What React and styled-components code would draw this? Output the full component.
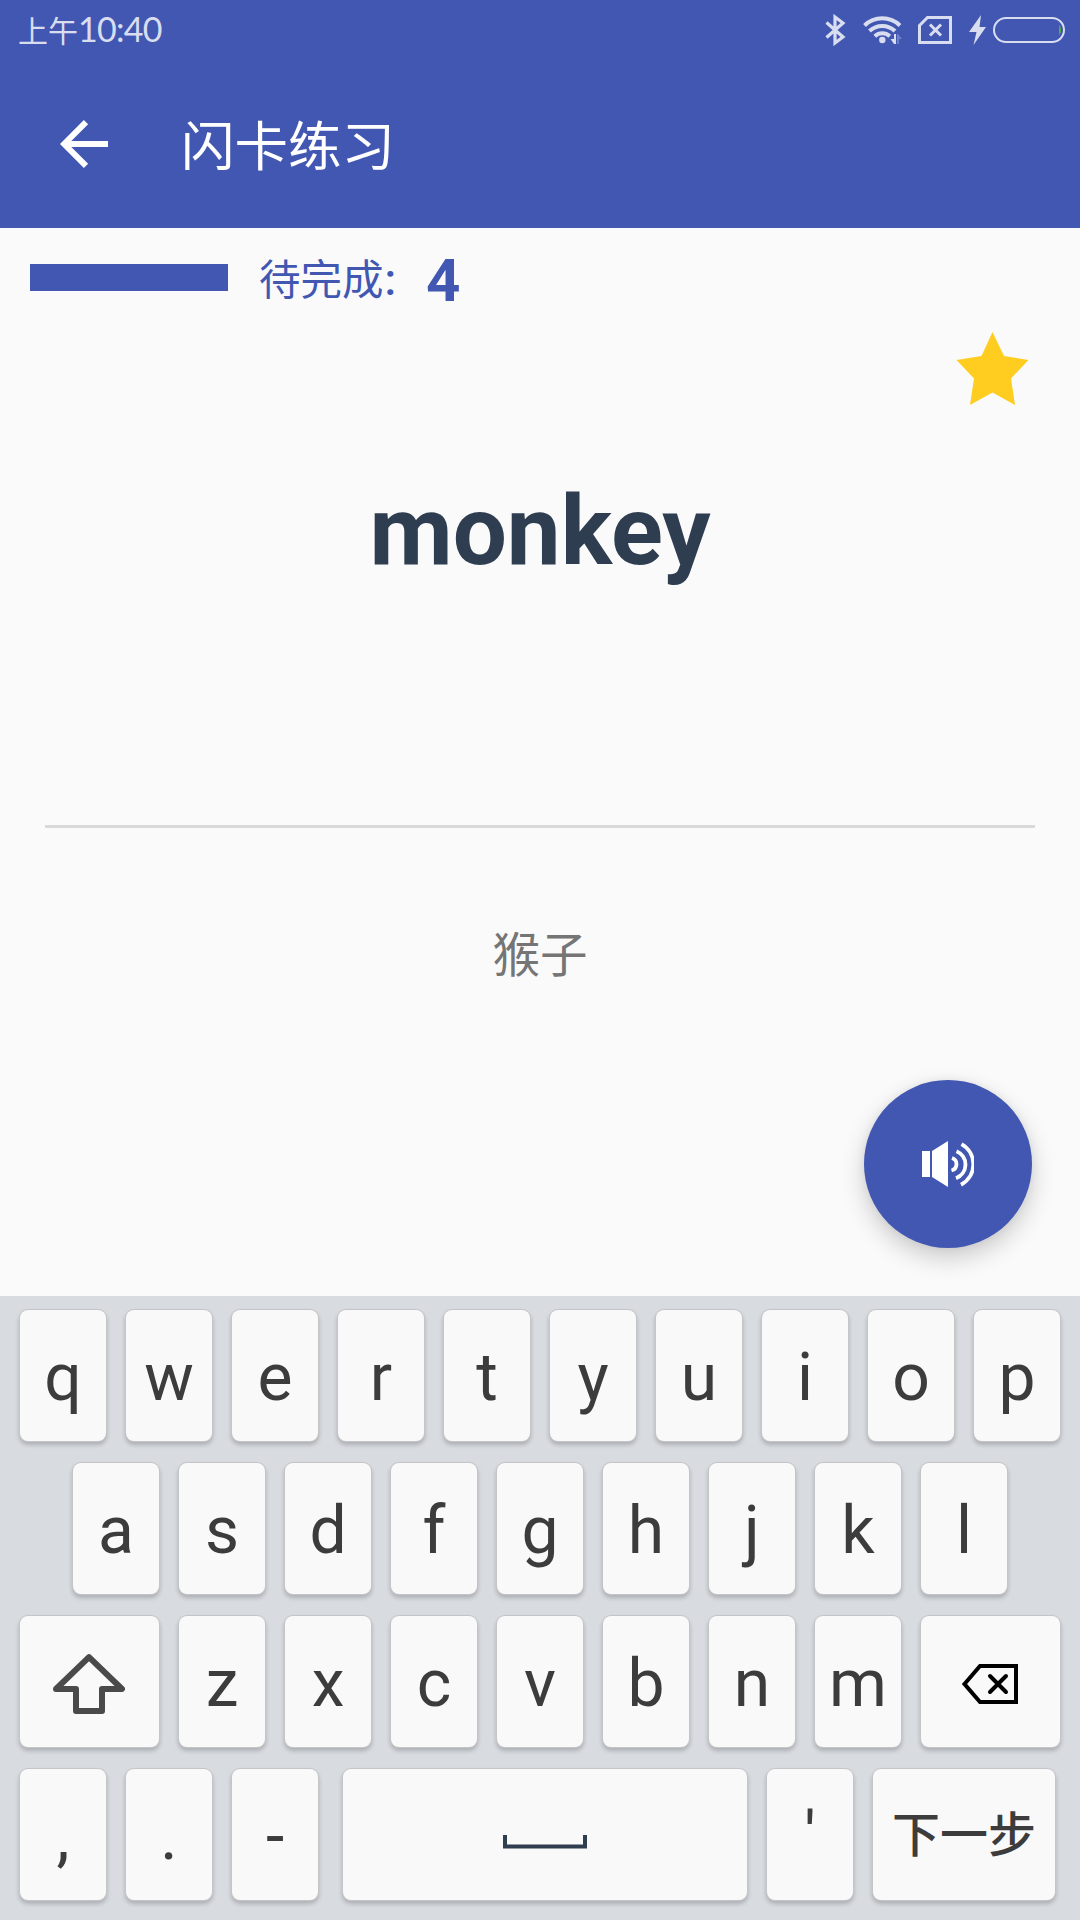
import React from 'react';
import styled, { createGlobalStyle } from 'styled-components';

const latin = `Roboto, "Noto Sans CJK SC", sans-serif`;
const cjk = `"Noto Sans CJK SC", Roboto, sans-serif`;

const GlobalStyle = createGlobalStyle`
  * { box-sizing: border-box; }
  body { margin: 0; background: #fafafa; font-family: ${latin}; }
`;

const Screen = styled.main`
  width: 1080px;
  height: 1920px;
  display: flex;
  flex-direction: column;
  overflow: hidden;
  background: #fafafa;
`;

const Header = styled.header`
  height: 228px;
  flex: none;
  background: #4257b2;
`;

const StatusBar = styled.div`
  height: 60px;
  display: flex;
  align-items: center;
  justify-content: space-between;
  padding: 0 15px 0 18px;
  color: #d9ddf0;
`;

const Clock = styled.div`
  display: flex;
  align-items: baseline;
  margin-top: -2px;
  font: 400 30px/60px ${cjk};
`;

const Digits = styled.span`
  font: 400 34px/60px Lato, sans-serif;
  letter-spacing: -0.7px;
`;

const StatusIcons = styled.div`
  display: flex;
  align-items: center;
  height: 60px;
`;

const AppBar = styled.div`
  height: 168px;
  display: flex;
  align-items: center;
  padding: 0 60px;
`;

const BackButton = styled.button`
  display: flex;
  border: 0;
  padding: 0;
  background: none;
  color: #fff;
`;

const Title = styled.h1`
  margin: -2px 0 0 73px;
  font: 400 53.500px/80px ${cjk};
  color: #fff;
`;

const Progress = styled.section`
  height: 102px;
  flex: none;
  display: flex;
  align-items: center;
  padding-left: 30px;
  color: #4257b2;
`;

const Bar = styled.div`
  width: 198px;
  height: 27px;
  margin-top: -3px;
  background: #4257b2;
`;

const Label = styled.span`
  width: 167px;
  margin: -1px 0 0 31px;
  font: 400 41.500px/60px ${cjk};
  white-space: nowrap;
`;

const Colon = styled.span`
  margin-left: 1px;
  font: 500 44px/60px ${latin};
`;

const Count = styled.strong`
  margin-top: 3px;
  font: 700 60px/66px ${latin};
`;

const Card = styled.section`
  height: 966px;
  flex: none;
  display: flex;
  flex-direction: column;
`;

const StarRow = styled.div`
  height: 78px;
  display: flex;
  justify-content: flex-end;
  padding: 2px 51px 0 0;
`;

const Word = styled.h2`
  height: 417px;
  margin: 0;
  padding-top: 67px;
  text-align: center;
  font: 700 96px/112px ${latin};
  color: #2e3d50;
`;

const Divider = styled.hr`
  width: 990px;
  height: 3px;
  margin: 0 auto;
  border: 0;
  background: #d9d9d9;
`;

const Meaning = styled.p`
  height: 252px;
  margin: 0;
  padding-top: 88px;
  text-align: center;
  font: 400 47.500px/72px ${cjk};
  color: #757575;
`;

const SpeakButton = styled.button`
  width: 168px;
  height: 168px;
  margin: 0 48px 0 auto;
  display: flex;
  align-items: center;
  justify-content: center;
  border: 0;
  padding: 0;
  border-radius: 50%;
  background: #4257b2;
  box-shadow: 0 10px 24px rgba(0, 0, 0, 0.19), 0 0 8px rgba(0, 0, 0, 0.06);
`;

const Keyboard = styled.section`
  flex: 1;
  display: flex;
  flex-direction: column;
  gap: 22px;
  padding: 14px 20px 0;
  background: #d8dbe0;
`;

const KeyRow = styled.div`
  display: flex;
  gap: 20px;
  padding-left: ${(p) => p.$indent || 0}px;
`;

const Key = styled.button`
  width: ${(p) => p.$width || 86}px;
  height: 131px;
  flex: none;
  display: flex;
  align-items: center;
  justify-content: center;
  margin: 0 0 0 ${(p) => p.$gap || 0}px;
  padding: ${(p) => (p.$icon ? '4px 2px 0 0' : '4px 0 0')};
  border: 0;
  border-radius: 8px;
  background: #f9f9f9;
  box-shadow: 0 0 0 1px #c4c5c7, 0 3px 4px 1px rgba(0, 0, 0, 0.2);
  font: 400 66px/78px ${latin};
  color: #3c3c3c;
`;

const SpaceMark = styled.svg`
  margin-top: 10px;
`;

const NextLabel = styled.span`
  margin-top: -11px;
  font: 500 48px/72px ${cjk};
`;

const Bluetooth = () => (
  <svg width="22" height="32" viewBox="0 0 22 32" fill="none" stroke="currentColor" strokeWidth="3.200">
    <path d="M1.500 8.500 18 23 10 29V3L18 9 1.500 23.500" />
  </svg>
);

const Wifi = () => (
  <svg width="42" height="32" viewBox="0 0 42 32" fill="none" stroke="currentColor" strokeWidth="4">
    <path d="M1.500 11.500a25.500 25.500 0 0 1 35.500 0M6.500 17a18.500 18.500 0 0 1 25.500 0M11.800 22.300a11 11 0 0 1 15 0" />
    <circle cx="19.300" cy="26" r="3.200" fill="currentColor" stroke="none" />
    <path d="M27.500 25H31V20h2v10h-2z" fill="currentColor" stroke="none" />
    <path d="M34 20h1l4 5h-3v5h-2z" fill="currentColor" opacity=".3" stroke="none" />
  </svg>
);

const NoSim = () => (
  <svg width="34" height="28" viewBox="0 0 34 28" fill="none" stroke="currentColor" strokeWidth="3">
    <path d="M1.500 9.500 9.500 1.500h23v25h-31zM12 8.500l11 11M23 8.500 12 19.500" />
  </svg>
);

const Bolt = () => (
  <svg width="18" height="30" viewBox="0 0 18 30" fill="currentColor">
    <path d="M12 0 0 17h7.500L4.500 30 17 12H10.500z" />
  </svg>
);

const Battery = () => (
  <svg width="72" height="26" viewBox="0 0 72 26" fill="none">
    <rect x="1" y="1" width="70" height="24" rx="12" stroke="currentColor" strokeWidth="2" />
    <path d="M66 7.500q4 5.500 0 11z" fill="#4cbb17" />
  </svg>
);

const iconSlots = [
  [Bluetooth, 16],
  [Wifi, 13],
  [NoSim, 17],
  [Bolt, 6],
  [Battery, 0],
];

const IconSlot = styled.span`
  display: flex;
  margin-right: ${(p) => p.$after}px;
`;

const letters = (text) => text.split('').map((c) => <Key key={c}>{c}</Key>);

export default function App() {
  return (
    <Screen>
      <GlobalStyle />
      <Header>
        <StatusBar>
          <Clock>上午<Digits>10:40</Digits></Clock>
          <StatusIcons>
            {iconSlots.map(([Icon, after], i) => (
              <IconSlot key={i} $after={after}><Icon /></IconSlot>
            ))}
          </StatusIcons>
        </StatusBar>
        <AppBar>
          <BackButton aria-label="返回">
            <svg width="48" height="48" viewBox="0 0 48 48" fill="none" stroke="currentColor" strokeWidth="6">
              <path d="M26 2.200 4.200 24 26 45.800M4 24h44" />
            </svg>
          </BackButton>
          <Title>闪卡练习</Title>
        </AppBar>
      </Header>

      <Progress>
        <Bar />
        <Label>待完成<Colon>:</Colon></Label>
        <Count>4</Count>
      </Progress>

      <Card>
        <StarRow>
          <svg width="73" height="74" viewBox="0 0 73 74" fill="#ffcd1f">
            <path d="M36.500 0 48 24 72.500 28 55 46.500 59 73 36.500 60.500 14 73 18 46.500 .500 28 25.500 24z" />
          </svg>
        </StarRow>
        <Word>monkey</Word>
        <Divider />
        <Meaning>猴子</Meaning>
        <SpeakButton aria-label="发音">
          <svg width="52" height="48" viewBox="0 0 52 48" fill="none" stroke="#fff" strokeWidth="3.800">
            <path d="M0 11h8v26H0zM10 11 26 1v46L10 37z" fill="#fff" stroke="none" />
            <path d="M30 18a6.500 6.500 0 0 1-.500 12.500M34.500 11.200a14.500 14.500 0 0 1-.500 27M39.500 4.200a23 23 0 0 1-.500 40.500" />
          </svg>
        </SpeakButton>
      </Card>

      <Keyboard>
        <KeyRow>{letters('qwertyuiop')}</KeyRow>
        <KeyRow $indent={53}>{letters('asdfghjkl')}</KeyRow>
        <KeyRow>
          <Key $width={139} $icon aria-label="Shift">
            <svg width="72" height="60" viewBox="0 0 72 60" fill="none" stroke="#4a4a4a" strokeWidth="6" strokeLinejoin="round">
              <path d="M36 3.200 69 35H49v22H23V35H3z" />
            </svg>
          </Key>
          {letters('zxcvbnm')}
          <Key $width={139} $icon aria-label="删除">
            <svg width="56" height="40" viewBox="0 0 56 40" fill="none" stroke="#000" strokeWidth="4">
              <path d="M2.500 20 18 2h36v36H18z" />
              <path d="M28 12l16 16M44 12 28 28" strokeLinecap="round" />
            </svg>
          </Key>
        </KeyRow>
        <KeyRow>
          {letters(',.-')}
          <Key $width={404} $gap={5} aria-label="空格">
            <SpaceMark width="84" height="14" viewBox="0 0 84 14" fill="none" stroke="#2e3d50" strokeWidth="4">
              <path d="M2 0v11.500h80V0" />
            </SpaceMark>
          </Key>
          {letters("'")}
          <Key $width={182}><NextLabel>下一步</NextLabel></Key>
        </KeyRow>
      </Keyboard>
    </Screen>
  );
}
